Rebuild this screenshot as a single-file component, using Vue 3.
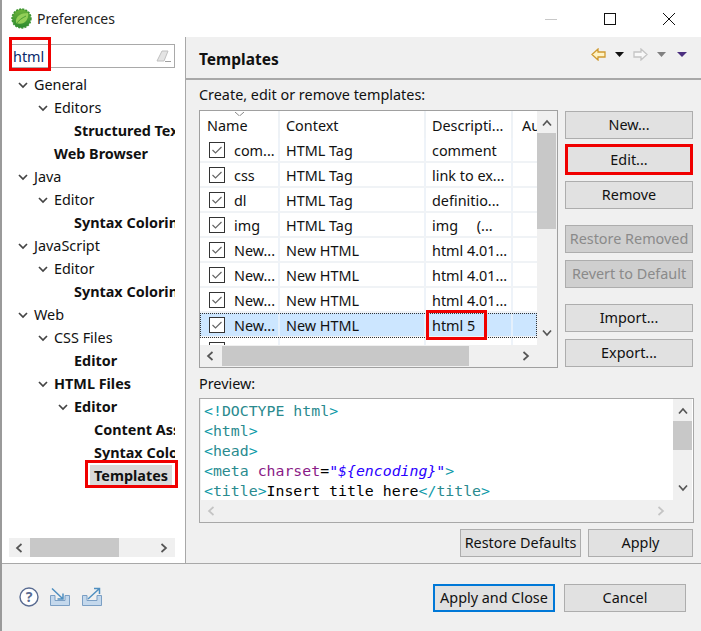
<script setup>
const tree = [
  { t: 'General', l: 0, arrow: true },
  { t: 'Editors', l: 1, arrow: true },
  { t: 'Structured Text Editors', l: 2, bold: true },
  { t: 'Web Browser', l: 1, bold: true },
  { t: 'Java', l: 0, arrow: true },
  { t: 'Editor', l: 1, arrow: true },
  { t: 'Syntax Coloring', l: 2, bold: true },
  { t: 'JavaScript', l: 0, arrow: true },
  { t: 'Editor', l: 1, arrow: true },
  { t: 'Syntax Coloring', l: 2, bold: true },
  { t: 'Web', l: 0, arrow: true },
  { t: 'CSS Files', l: 1, arrow: true },
  { t: 'Editor', l: 2, bold: true },
  { t: 'HTML Files', l: 1, arrow: true, bold: true },
  { t: 'Editor', l: 2, arrow: true, bold: true },
  { t: 'Content Assist', l: 3, bold: true },
  { t: 'Syntax Coloring', l: 3, bold: true },
  { t: 'Templates', l: 3, bold: true, sel: true }
]
const rows = [
  ['com...', 'HTML Tag', 'comment'],
  ['css', 'HTML Tag', 'link to ex...'],
  ['dl', 'HTML Tag', 'definitio...'],
  ['img', 'HTML Tag', 'img     (...'],
  ['New...', 'New HTML', 'html 4.01...'],
  ['New...', 'New HTML', 'html 4.01...'],
  ['New...', 'New HTML', 'html 4.01...'],
  ['New...', 'New HTML', 'html 5'],
  ['', '', '']
]
</script>

<template>
  <div class="win">
    <header class="title">
      <svg class="logo" width="21" height="21" viewBox="0 0 21 21">
        <defs>
          <linearGradient id="lg" x1="0" y1="0" x2="0" y2="1">
            <stop offset="0" stop-color="#6fb43a" />
            <stop offset="1" stop-color="#2b8a2f" />
          </linearGradient>
        </defs>
        <circle cx="10.5" cy="10.5" r="9.4" fill="url(#lg)" stroke="#3d9434" stroke-width="1.6" stroke-dasharray="2 1.2" />
        <path d="M5 15 C4 8 10 5 17 5 C18 12 13 17 7 15.5 Z" fill="#93cf58" />
        <path d="M5 16 C8 12 11 10 15 8" fill="none" stroke="#4a9e34" stroke-width="1" />
      </svg>
      <span class="title-text">Preferences</span>
      <div class="win-btns">
        <svg width="12" height="12" viewBox="0 0 12 12"><path d="M0 6.5H12" stroke="#c8c8c8" /></svg>
        <svg width="12" height="12" viewBox="0 0 12 12"><rect x=".5" y=".5" width="11" height="11" fill="none" stroke="#111" /></svg>
        <svg width="12" height="12" viewBox="0 0 12 12"><path d="M0 0L12 12M12 0L0 12" stroke="#111" /></svg>
      </div>
    </header>

    <main class="main">
      <aside class="left">
        <div class="search">
          <span>html</span>
          <svg width="16" height="14" viewBox="0 0 16 14">
            <path d="M1 12L6 2H12L8 12Z" fill="#e4e4e4" stroke="#c0c0c0" />
            <path d="M9 12.5H15" stroke="#a0a0a0" />
          </svg>
        </div>
        <div class="red red-search"></div>
        <div class="tree">
          <div v-for="(n, i) in tree" :key="i" class="node" :class="['lv' + n.l, { bold: n.bold }]">
            <svg v-if="n.arrow" class="twist" width="10" height="7" viewBox="0 0 10 7"><path d="M1 1L5 5L9 1" fill="none" stroke="#444" stroke-width="1.7" /></svg>
            <span :class="{ sel: n.sel }">{{ n.t }}</span>
          </div>
        </div>
        <div class="red red-tpl"></div>
        <div class="hbar tree-bar">
          <svg width="8" height="10" viewBox="0 0 8 10"><path d="M6.5 1L2 5L6.5 9" fill="none" stroke="#555" stroke-width="1.7" /></svg>
          <div class="thumb t1"></div>
          <svg width="8" height="10" viewBox="0 0 8 10"><path d="M1.5 1L6 5L1.5 9" fill="none" stroke="#555" stroke-width="1.7" /></svg>
        </div>
      </aside>

      <section class="right">
        <div class="head">
          <h1>Templates</h1>
          <div class="nav">
            <svg width="15" height="13" viewBox="0 0 15 13"><path d="M1 6.5L7 1V4H14V9H7V12Z" fill="#fff3c4" stroke="#cf9a30" stroke-width="1.3" /></svg>
            <svg class="drop" width="9" height="5" viewBox="0 0 9 5"><path d="M0 0H9L4.5 5Z" fill="#111" /></svg>
            <svg width="15" height="13" viewBox="0 0 15 13"><path d="M14 6.5L8 1V4H1V9H8V12Z" fill="#f8f8f8" stroke="#c4c4c4" stroke-width="1.3" /></svg>
            <svg class="drop" width="9" height="5" viewBox="0 0 9 5"><path d="M0 0H9L4.5 5Z" fill="#808080" /></svg>
            <svg class="drop last" width="10" height="5" viewBox="0 0 10 5"><path d="M0 0H10L5 5Z" fill="#4b2f7f" /></svg>
          </div>
        </div>
        <div class="content">
          <div class="label">Create, edit or remove templates:</div>
          <div class="upper">
            <div class="table">
              <div class="table-main">
                <div class="grid-view">
                  <div class="thead">
                    <svg class="sort" width="9" height="4" viewBox="0 0 9 4"><path d="M0 0L4.5 4L9 0" fill="none" stroke="#888" /></svg>
                    <div class="c1">Name</div>
                    <div class="c2">Context</div>
                    <div class="c3">Descripti...</div>
                    <div class="c4">Au</div>
                  </div>
                  <div v-for="(r, i) in rows" :key="i" class="row" :class="{ selected: i === 7 }">
                    <div class="c1">
                      <svg class="cb" width="16" height="16" viewBox="0 0 16 16">
                        <rect x=".5" y=".5" width="15" height="15" fill="#fff" stroke="#333" />
                        <path d="M3.5 8L6.5 11L12.5 5" fill="none" stroke="#666" stroke-width="1.2" />
                      </svg>
                      <span>{{ r[0] }}</span>
                    </div>
                    <div class="c2">{{ r[1] }}</div>
                    <div class="c3">{{ r[2] }}</div>
                    <div class="c4"></div>
                  </div>
                </div>
                <div class="hbar table-bar">
                  <svg width="8" height="10" viewBox="0 0 8 10"><path d="M6.5 1L2 5L6.5 9" fill="none" stroke="#555" stroke-width="1.7" /></svg>
                  <div class="thumb t2"></div>
                  <svg width="8" height="10" viewBox="0 0 8 10"><path d="M1.5 1L6 5L1.5 9" fill="none" stroke="#555" stroke-width="1.7" /></svg>
                </div>
              </div>
              <div class="vbar table-v">
                <svg width="10" height="8" viewBox="0 0 10 8"><path d="M1 6.5L5 2L9 6.5" fill="none" stroke="#555" stroke-width="1.7" /></svg>
                <div class="vthumb v1"></div>
                <svg class="vdown" width="10" height="8" viewBox="0 0 10 8"><path d="M1 1.5L5 6L9 1.5" fill="none" stroke="#555" stroke-width="1.7" /></svg>
              </div>
              <div class="red red-html5"></div>
            </div>
            <div class="side">
              <button class="btn">New...</button>
              <button class="btn edit">Edit...</button>
              <button class="btn">Remove</button>
              <button class="btn off gap">Restore Removed</button>
              <button class="btn off">Revert to Default</button>
              <button class="btn gap">Import...</button>
              <button class="btn">Export...</button>
            </div>
          </div>
          <div class="label preview-label">Preview:</div>
          <div class="preview">
            <div class="code-wrap">
              <div class="code">
                <div><i class="b">&lt;!</i><i class="k">DOCTYPE html</i><i class="b">&gt;</i></div>
                <div><i class="b">&lt;</i><i class="k">html</i><i class="b">&gt;</i></div>
                <div><i class="b">&lt;</i><i class="k">head</i><i class="b">&gt;</i></div>
                <div><i class="b">&lt;</i><i class="k">meta</i> <i class="a">charset</i>=<em>"${encoding}"</em><i class="b">&gt;</i></div>
                <div><i class="b">&lt;</i><i class="k">title</i><i class="b">&gt;</i>Insert title here<i class="b">&lt;/</i><i class="k">title</i><i class="b">&gt;</i></div>
              </div>
              <div class="vbar prev-v">
                <svg width="10" height="8" viewBox="0 0 10 8"><path d="M1 6.5L5 2L9 6.5" fill="none" stroke="#555" stroke-width="1.7" /></svg>
                <div class="vthumb v2"></div>
                <svg class="vdown" width="10" height="8" viewBox="0 0 10 8"><path d="M1 1.5L5 6L9 1.5" fill="none" stroke="#555" stroke-width="1.7" /></svg>
              </div>
            </div>
            <div class="prev-h">
              <svg width="8" height="10" viewBox="0 0 8 10"><path d="M6.5 1L2 5L6.5 9" fill="none" stroke="#c4c4c4" stroke-width="1.7" /></svg>
              <svg width="8" height="10" viewBox="0 0 8 10"><path d="M1.5 1L6 5L1.5 9" fill="none" stroke="#c4c4c4" stroke-width="1.7" /></svg>
            </div>
          </div>
          <div class="actions">
            <button class="btn rd">Restore Defaults</button>
            <button class="btn ap">Apply</button>
          </div>
        </div>
      </section>
    </main>

    <footer class="foot">
      <div class="foot-icons">
        <svg width="20" height="20" viewBox="0 0 20 20">
          <circle cx="10" cy="10" r="9" fill="#fff" stroke="#5a6c92" stroke-width="1.4" />
          <text x="10" y="15" text-anchor="middle" class="q">?</text>
        </svg>
        <svg width="22" height="20" viewBox="0 0 22 20">
          <path d="M1.5 8.5H6V13.5H16V8.5H20.5V18.5H1.5Z" fill="#c4d8ec" stroke="#7b9fc4" />
          <path d="M3 1.5L14 12M14 6.5V12H8.5" fill="none" stroke="#4f8fc0" stroke-width="1.5" />
        </svg>
        <svg width="22" height="20" viewBox="0 0 22 20">
          <path d="M1.5 8.5H6V13.5H16V8.5H20.5V18.5H1.5Z" fill="#c4d8ec" stroke="#7b9fc4" />
          <path d="M7 12L18.5 1.5M13 1.5H18.5V7" fill="none" stroke="#4f8fc0" stroke-width="1.5" />
        </svg>
      </div>
      <div class="foot-btns">
        <button class="btn def">Apply and Close</button>
        <button class="btn cancel">Cancel</button>
      </div>
    </footer>
  </div>
</template>

<style>
html, body { margin: 0; background: #fff; }
</style>

<style scoped>
.win {
  width: 701px;
  height: 631px;
  box-sizing: border-box;
  border-left: 2px solid #9a9a9a;
  display: flex;
  flex-direction: column;
  overflow: hidden;
  font-family: "Noto Sans", sans-serif;
  font-size: 14.4px;
  color: #111;
  background: #f0f0f0;
}
.title {
  height: 37px;
  flex: none;
  background: #fff;
  display: flex;
  align-items: center;
  padding-left: 9px;
}
.logo { margin-right: 5px; }
.title-text { font-size: 14px; color: #222; }
.win-btns {
  margin-left: auto;
  display: flex;
  gap: 47px;
  padding-right: 26px;
}
.main { height: 526px; flex: none; display: flex; }
.left {
  width: 184px;
  flex: none;
  background: #fff;
  border-right: 1px solid #a8a8a8;
  position: relative;
  padding: 7px 10px 0 7px;
  box-sizing: border-box;
  display: flex;
  flex-direction: column;
}
.search {
  height: 24px;
  box-sizing: border-box;
  border: 1px solid #a9a9a9;
  display: flex;
  align-items: center;
  justify-content: space-between;
  padding: 0 2px 0 3px;
  color: #0a2a6a;
  flex: none;
}
.tree { height: 470px; overflow: hidden; padding-top: 5px; flex: none; box-sizing: border-box; white-space: nowrap; width: 166px; }
.node { height: 23px; line-height: 23px; position: relative; }
.twist { position: absolute; top: 9px; }
.lv0 { padding-left: 25px; } .lv0 .twist { left: 9px; }
.lv1 { padding-left: 45px; } .lv1 .twist { left: 29px; }
.lv2 { padding-left: 65px; } .lv2 .twist { left: 49px; }
.lv3 { padding-left: 85px; }
.bold { font-weight: 700; }
.sel { background: #d9d9d9; padding: 0 4px; margin-left: -4px; display: inline-block; height: 22px; line-height: 22px; }
.hbar { display: flex; align-items: center; justify-content: space-between; background: #f0f0f0; box-sizing: border-box; }
.tree-bar { height: 19px; padding: 0 7px 0 6px; margin-top: 0; flex: none; width: 166px; }
.thumb { background: #c8c8c8; height: 100%; }
.t1 { width: 89px; margin-left: 7px; margin-right: auto; }
.right { flex: 1; min-width: 0; display: flex; flex-direction: column; }
.head {
  height: 43px;
  box-sizing: border-box;
  border-bottom: 2px solid #a8a8a8;
  flex: none;
  display: flex;
  align-items: center;
  justify-content: space-between;
  padding: 0 14px 0 13px;
}
.head h1 { margin: 0; font-size: 15.5px; font-weight: 700; color: #111; position: relative; top: 1px; }
.nav { display: flex; align-items: center; position: relative; top: -3px; }
.nav .drop { margin: 0 9px 0 9px; }
.nav .drop.last { margin: 0 0 0 2px; }
.content { padding: 5px 8px 0 13px; display: flex; flex-direction: column; }
.label { height: 20px; line-height: 20px; }
.upper { display: flex; margin-top: 5px; gap: 7px; }
.table {
  width: 359px;
  height: 258px;
  box-sizing: border-box;
  border: 1px solid #a0a0a0;
  background: #f0f0f0;
  display: flex;
  position: relative;
  flex: none;
}
.table-main { width: 337px; flex: none; display: flex; flex-direction: column; }
.grid-view { height: 234px; overflow: hidden; background: #fff; flex: none; }
.thead, .row { display: flex; padding-left: 1px; white-space: nowrap; }
.thead { height: 27px; line-height: 29px; position: relative; }
.sort { position: absolute; left: 35px; top: 1px; }
.thead > div { border-right: 2px solid #eef2f6; box-sizing: border-box; padding-left: 6px; }
.row { height: 25px; line-height: 26px; box-sizing: border-box; border-bottom: 2px solid #f0f3f6; }
.row > div { border-right: 2px solid #eef3f9; box-sizing: border-box; padding-left: 6px; overflow: hidden; white-space: pre; }
.c1 { width: 79px; flex: none; }
.c2 { width: 146px; flex: none; }
.c3 { width: 87px; flex: none; }
.c4 { flex: 1; overflow: hidden; }
.thead > .c4 { padding-left: 9px; border-right: 0; }
.row > .c4 { border-right: 0; }
.row > .c1 { display: flex; align-items: center; gap: 9px; padding-top: 1px; }
.row > .c1 span { align-self: flex-start; margin-top: -1px; }
.row:first-of-type .c1 { background: #f7f7f7; }
.selected { background: #cce6ff; outline: 1px dotted #333; outline-offset: -1px; }
.selected > div { border-right-color: #e4f0fc; }
.cb { flex: none; margin-left: 2px; }
.table-bar { height: 20px; padding: 0 7px 0 6px; margin-top: 1px; }
.t2 { width: 247px; margin-left: 8px; margin-right: auto; }
.vbar { display: flex; flex-direction: column; align-items: center; background: #f0f0f0; flex: none; }
.table-v { width: 19px; height: 234px; padding-top: 8px; box-sizing: border-box; }
.vthumb { width: 100%; background: #c8c8c8; flex: none; }
.v1 { height: 96px; margin-top: 6px; }
.vdown { margin-top: auto; margin-bottom: 8px; }
.side { display: flex; flex-direction: column; width: 128px; flex: none; padding-top: 1px; }
.btn {
  font: inherit;
  color: #111;
  height: 28px;
  box-sizing: border-box;
  background: #e1e1e1;
  border: 1px solid #adadad;
  padding: 0;
  white-space: nowrap;
  line-height: 24px;
  flex: none;
}
.side .btn { margin-bottom: 7px; }
.side .btn:last-child { margin-bottom: 0; }
.side .btn.edit { height: 31px; margin-top: -2px; margin-bottom: 6px; border: 3px solid #f00000; }
.side .btn.gap { margin-top: 9px; }
.off { color: #8a8a8a; background: #cfcfcf; }
.preview-label { margin-top: 6px; }
.preview {
  width: 495px;
  height: 125px;
  margin-top: 4px;
  box-sizing: border-box;
  border: 1px solid #a8a8a8;
  background: #f0f0f0;
  display: flex;
  flex-direction: column;
}
.code-wrap { display: flex; height: 101px; flex: none; background: #fff; margin-left: 1px; }
.code {
  flex: 1;
  font-family: "DejaVu Sans Mono", monospace;
  font-size: 14.85px;
  line-height: 20px;
  padding: 2px 0 0 3px;
  white-space: pre;
  color: #000;
}
.code i { font-style: normal; }
.code em { font-style: italic; color: #2a00ff; }
.b { color: #0d9aa8; }
.k { color: #2a8a8e; }
.a { color: #8a1a86; }
.prev-v { width: 19px; padding-top: 8px; box-sizing: border-box; margin-right: 1px; }
.v2 { height: 29px; margin-top: 6px; }
.prev-h { display: flex; justify-content: space-between; align-items: center; padding: 0 28px 0 7px; height: 21px; }
.actions { display: flex; justify-content: flex-end; gap: 7px; margin-top: 6px; }
.rd { width: 121px; }
.ap { width: 105px; }
.foot {
  flex: 1;
  border-top: 1px solid #a8a8a8;
  display: flex;
  align-items: flex-start;
  justify-content: space-between;
  box-sizing: border-box;
}
.foot-icons { display: flex; gap: 10px; padding: 23px 0 0 17px; align-items: center; }
.q { font: 700 14px "Noto Sans", sans-serif; fill: #5a6c92; }
.foot-btns { display: flex; gap: 9px; padding: 20px 15px 0 0; }
.foot-btns .btn { width: 122px; }
.def { border: 2px solid #0078d7; }
.red { position: absolute; border: 3px solid #f00000; box-sizing: border-box; pointer-events: none; }
.red-search { left: 7px; top: 0; width: 42px; height: 34px; }
.red-tpl { left: 83px; top: 423px; width: 93px; height: 28px; }
.red-html5 { left: 226px; top: 199px; width: 61px; height: 30px; }
</style>
